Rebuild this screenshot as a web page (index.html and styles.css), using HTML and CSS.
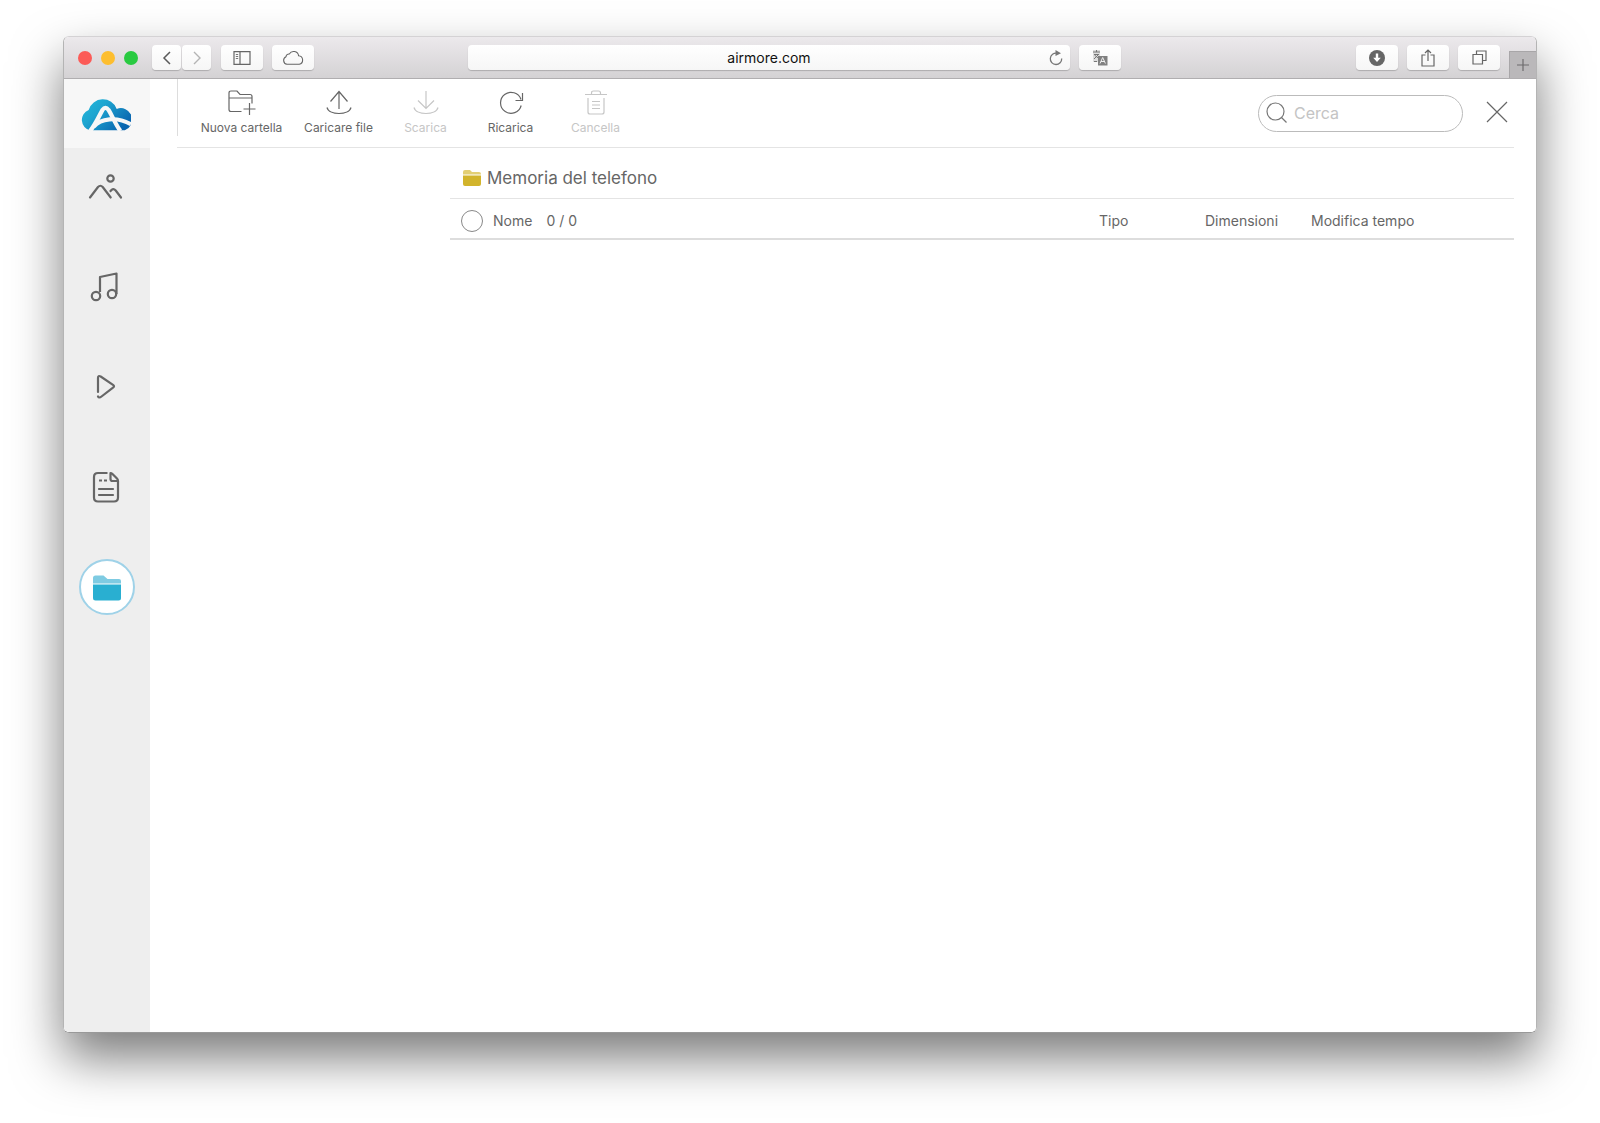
FILE: index.html
```html
<!DOCTYPE html>
<html lang="it">
<head>
<meta charset="utf-8">
<title>airmore.com</title>
<link rel="stylesheet" href="styles.css">
</head>
<body>
<div class="window">
  <header class="titlebar">
    <div class="lights"><span class="light red"></span><span class="light yellow"></span><span class="light green"></span></div>
    <div class="nav-pair">
      <button class="tb-btn small" aria-label="Indietro"><svg width="10" height="14" viewBox="0 0 10 14"><path d="M8 1 2 7l6 6" stroke="#5a5a5a" stroke-width="1.5"/></svg></button>
      <button class="tb-btn small" aria-label="Avanti"><svg width="10" height="14" viewBox="0 0 10 14"><path d="m2 1 6 6-6 6" stroke="#b4b4b4" stroke-width="1.4"/></svg></button>
    </div>
    <button class="tb-btn" aria-label="Barra laterale"><svg width="18" height="14" viewBox="0 0 18 14"><path d="M1 .7h16v12.6H1zM7 1v12" stroke="#666" stroke-width="1.2"/><path d="M2.8 3.5h2.4M2.8 5.5h2.4M2.8 7.5h2.4" stroke="#777"/></svg></button>
    <button class="tb-btn" aria-label="iCloud"><svg width="22" height="16" viewBox="0 0 22 16"><path d="M5 14.300a4 4 0 0 1-1-7.600A3 3 0 0 1 7.300 4 5 5 0 0 1 16.600 5.800 4.300 4.300 0 0 1 17.200 14.300Z" stroke="#666" stroke-width="1.100"/></svg></button>
    <div class="address">
      <input class="url" type="text" value="airmore.com" aria-label="Indirizzo">
      <button class="reload" aria-label="Ricarica pagina"><svg width="14" height="16" viewBox="0 0 14 16"><path d="M8 3.200A5.700 5.700 0 1 0 12.700 8.500" stroke="#777" stroke-width="1.300"/><path d="M6.500 0 12 3.200 6.500 6Z" fill="#777"/></svg></button>
    </div>
    <button class="tb-btn translate" aria-label="Traduci"><svg width="16" height="16" viewBox="0 0 16 16"><path d="M1 0h7v12H1z" fill="#ddd"/><path d="M1 2h7M2 4.500h5M4.500 0v2M6.500 4.500 2 9M2.500 5l5 4M2 11.500h3" stroke="#777"/><path d="M6 6h9.500v9.500H6z" fill="#808080"/><path d="m8 13.500 2.700-6 2.700 6M9 11.500h3.500" stroke="#eee"/></svg></button>
    <div class="tools">
      <button class="tb-btn" aria-label="Download"><svg width="16" height="16" viewBox="0 0 16 16"><circle cx="8" cy="8" r="8" fill="#666"/><path d="M6.800 3.500h2.400v4.200h2.600L8 12 4.200 7.700h2.600z" fill="#fff"/></svg></button>
      <button class="tb-btn" aria-label="Condividi"><svg width="14" height="18" viewBox="0 0 14 18"><path d="M4.500 6H1v11h12V6H9.500M7 12V1M4 4l3-3 3 3" stroke="#666" stroke-width="1.200"/></svg></button>
      <button class="tb-btn" aria-label="Pannelli"><svg width="15" height="15" viewBox="0 0 15 15"><path d="M1 4.500h9.500V14H1zM4.500 4.200V1H14v9.500h-3" stroke="#666" stroke-width="1.200"/></svg></button>
    </div>
    <button class="new-tab" aria-label="Nuovo pannello"><svg width="14" height="14" viewBox="0 0 14 14"><path d="M7 1v12M1 7h12" stroke="#6d6b6d" stroke-width="1.200"/></svg></button>
  </header>

  <div class="app">
    <aside class="sidebar">
      <a class="logo" href="#" aria-label="AirMore"><svg width="50" height="35" viewBox="1 0 49 34">
        <defs><linearGradient id="cloud" x1="0" y1="0" x2="1" y2=".6"><stop offset="0" stop-color="#23b9dc"/><stop offset=".4" stop-color="#1ea5d0"/><stop offset="1" stop-color="#0a66b0"/></linearGradient></defs>
        <path d="M10 33.500A10.500 10.500 0 0 1 8.500 13.500 14.500 14.500 0 0 1 36 12.500 11 11 0 0 1 44 33.500Z" fill="url(#cloud)"/>
        <path d="M10 34C15 28 18.500 20 22 13.500Q25 9.500 28 13.500C32 20 34.500 27 39.500 34" stroke="#f7f7f7" stroke-width="4.200"/>
        <path d="M13.500 30C20 22 36 19.500 50 27.500" stroke="#f7f7f7" stroke-width="4"/>
      </svg></a>
      <nav class="side-nav">
        <a class="side-link" href="#" aria-label="Immagini"><svg width="36" height="28" viewBox="0 0 36 28"><g stroke="#666" stroke-width="2.200" stroke-linecap="round" stroke-linejoin="round"><circle cx="22.500" cy="5.500" r="3.200"/><path d="m2 24.500 8-10.500q2.400-2.500 4.700 0l8 10.500M22.500 18q2.600-3.600 5.200-.5l5.300 7"/></g></svg></a>
        <a class="side-link" href="#" aria-label="Musica"><svg width="32" height="30" viewBox="0 0 32 30"><g stroke="#666" stroke-width="2.200" stroke-linejoin="round"><circle cx="6" cy="24" r="4.200"/><circle cx="22" cy="22" r="4.200"/><path d="M10 20V5l16.500-3.500V22"/></g></svg></a>
        <a class="side-link" href="#" aria-label="Video"><svg width="20" height="26" viewBox="0 0 20 26"><path d="M2 18V4q0-3 2.700-1.500L17 10.800q2 1.400 0 2.800L5.500 22.500Q3 24.500 2 22.500" stroke="#666" stroke-width="2.200" stroke-linecap="round"/></svg></a>
        <a class="side-link" href="#" aria-label="Documenti"><svg width="28" height="32" viewBox="0 0 28 32"><g stroke="#666" stroke-width="2.200"><path d="M15.500 2H6Q2 2 2 6v20.500q0 4 4 4h16q4 0 4-4V10"/><path d="M18.500 2v6q0 2 2 2H26q0-1.500-1-2.500L20.500 3q-1-1-2-1Z" stroke-linejoin="round"/><path d="M7 18h14M7 24h14" stroke-linecap="round"/><path d="M7 9.500h3M12 9.500h3"/></g></svg></a>
        <a class="side-link active" href="#" aria-label="File"><svg width="30" height="26" viewBox="0 0 30 26"><path d="M1 8.500V3q0-2.500 2.500-2.500h8L15.500 4H27q2 0 2 2v2.500Z" fill="#7ecbe2"/><path d="M1 9.500h28V23q0 2.500-2.500 2.500h-23Q1 25.500 1 23Z" fill="#29afd1"/></svg></a>
      </nav>
    </aside>

    <main class="content">
      <div class="toolbar">
        <div class="actions">
          <button class="action wide"><svg width="28" height="26" viewBox="0 0 28 26"><path d="M13.500 21.500H3q-2 0-2-2V3q0-2 2-2h6l3 3.500h10q2 0 2 2v7M1 8h23M21.500 13v12M15.500 19h12" stroke="#666" stroke-width="1.200"/></svg>Nuova cartella</button>
          <button class="action mid"><svg width="26" height="26" viewBox="0 0 26 26"><path d="M13 19V2M4.500 11.500 13 1.500l8.500 10M1 17.500c2 8 22 8 24 0" stroke="#666" stroke-width="1.200"/></svg>Caricare file</button>
          <button class="action" disabled><svg width="26" height="26" viewBox="0 0 26 26"><path d="M13 1v17M5 10.500l8 8 8-8M1 17.500c2 8 22 8 24 0" stroke="#c6c6c6" stroke-width="1.200"/></svg>Scarica</button>
          <button class="action"><svg width="26" height="26" viewBox="0 0 26 26"><path d="M23.200 15.500A10.500 10.500 0 1 1 23 9.500M24.500 3v7.500h-7" stroke="#666" stroke-width="1.200"/></svg>Ricarica</button>
          <button class="action" disabled><svg width="24" height="26" viewBox="0 0 24 26"><path d="M1 4.500h22M7.500 4.500V3q0-2 2-2h5q2 0 2 2v1.500M4 8v14q0 2 2 2h12q2 0 2-2V8M8 11.500h8M8 15h8M8 18.500h8" stroke="#c6c6c6" stroke-width="1.200"/></svg>Cancella</button>
        </div>
        <label class="search"><svg width="22" height="22" viewBox="0 0 22 22"><circle cx="9.500" cy="9.500" r="8.500" stroke="#777" stroke-width="1.200"/><path d="m15.500 15.500 5 5" stroke="#777" stroke-width="1.200"/></svg><input type="text" placeholder="Cerca" aria-label="Cerca"></label>
        <button class="close" aria-label="Chiudi"><svg width="22" height="22" viewBox="0 0 22 22"><path d="m1 1 20 20M21 1 1 21" stroke="#666" stroke-width="1.200"/></svg></button>
      </div>
      <div class="panes">
        <section class="files">
          <div class="path"><svg width="18" height="16" viewBox="0 0 18 16"><path d="M0 4.500V2Q0 0 2 0h5l2 2h7q2 0 2 2v.5Z" fill="#e3cf74"/><path d="M0 5.500h18V14q0 2-2 2H2q-2 0-2-2Z" fill="#d2b42c"/></svg><a href="#">Memoria del telefono</a></div>
          <table class="list">
            <thead><tr>
              <th class="name"><div class="name-cell"><input type="checkbox" id="all"><label for="all">Nome</label><span>0 / 0</span></div></th>
              <th class="type">Tipo</th>
              <th class="size">Dimensioni</th>
              <th class="date">Modifica tempo</th>
            </tr></thead>
          </table>
        </section>
      </div>
    </main>
  </div>
</div>
</body>
</html>
```
FILE: styles.css
```css
* { box-sizing: border-box; }

body {
  margin: 0;
  min-height: 100vh;
  padding: 36px 63px 90px;
  display: flex;
  background: #fff;
  color: #666;
  font-family: Inter, "Liberation Sans", sans-serif;
}

button {
  border: 0;
  padding: 0;
  background: none;
  font: inherit;
  color: inherit;
}

input { font: inherit; }
a { color: inherit; text-decoration: none; }
svg { display: block; fill: none; flex: none; }

.window {
  flex: 1;
  display: flex;
  flex-direction: column;
  border-radius: 6px;
  border: 1px solid #b4b4b4;
  border-top-color: #d4d2d4;
  border-bottom-color: #999;
  box-shadow: 0 25px 50px rgba(0, 0, 0, .52);
  overflow: hidden;
}

/* Browser title bar */
.titlebar {
  display: flex;
  align-items: center;
  height: 42px;
  padding-left: 14px;
  background: linear-gradient(#ece9ec, #d4d2d4);
  border-bottom: 1px solid #b0aeb0;
}

.lights { display: flex; gap: 9px; margin-right: 14px; }
.light { width: 14px; height: 14px; border-radius: 50%; }
.red { background: #fc5b57; }
.yellow { background: #fdbe2f; }
.green { background: #29ca41; }

.nav-pair { display: flex; gap: 1px; margin-right: 10px; }

.tb-btn {
  display: flex;
  align-items: center;
  justify-content: center;
  width: 42px;
  height: 25px;
  margin-right: 9px;
  border-radius: 4px;
  background: linear-gradient(#fff, #f6f6f6);
  box-shadow: 0 1px 1px rgba(0, 0, 0, .2);
}
.tb-btn.small { width: 29px; margin-right: 0; }

.address {
  flex: 1;
  display: flex;
  align-items: center;
  height: 25px;
  margin-left: 145px;
  padding: 0 7px 0 21px;
  border-radius: 4px;
  background: linear-gradient(#fff, #f6f6f6);
  box-shadow: 0 1px 1px rgba(0, 0, 0, .2);
}
.url {
  flex: 1;
  min-width: 0;
  border: 0;
  padding: 0;
  background: none;
  text-align: center;
  font-size: 14px;
  color: #111;
}
.translate { margin-left: 9px; }
.tools { display: flex; margin-left: 226px; }
.new-tab {
  display: flex;
  align-items: center;
  justify-content: center;
  align-self: flex-end;
  width: 27px;
  height: 27px;
  background: #bab8ba;
  border: 1px solid #a8a6a8;
  border-width: 1px 0 0 1px;
}

/* Application */
.app { flex: 1; display: flex; background: #fff; }

.sidebar { width: 86px; background: #eee; }
.logo {
  display: flex;
  align-items: center;
  justify-content: center;
  height: 69px;
  padding: 0 2px 0 0;
  background: #f7f7f7;
}
.side-nav {
  display: flex;
  flex-direction: column;
  align-items: center;
  gap: 44px;
  padding-top: 11px;
}
.side-link {
  display: flex;
  align-items: center;
  justify-content: center;
  width: 56px;
  height: 56px;
  padding-right: 2px;
  border-radius: 50%;
}
.side-link.active {
  padding: 2px 0 0;
  background: #fff;
  border: 2px solid #9fd2e8;
}

.content {
  flex: 1;
  min-width: 0;
  padding: 0 22px 0 27px;
  display: flex;
  flex-direction: column;
}

.toolbar {
  display: flex;
  align-items: flex-start;
  height: 69px;
  border-bottom: 1px solid #e4e4e4;
}
.actions {
  display: flex;
  height: 57px;
  padding-left: 11px;
  margin-right: auto;
  border-left: 1px solid #ddd;
}
.action {
  display: flex;
  flex-direction: column;
  align-items: center;
  gap: 4px;
  width: 85px;
  padding-top: 11px;
  font-size: 12px;
  line-height: 16px;
  white-space: nowrap;
}
.action.mid { width: 89px; }
.action.wide { width: 105px; }
.action:disabled { color: #c6c6c6; }

.search {
  display: flex;
  align-items: center;
  gap: 6px;
  width: 205px;
  height: 37px;
  margin-top: 16px;
  padding: 0 16px 2px 7px;
  border: 1px solid #bbb;
  border-radius: 19px;
}
.search input {
  flex: 1;
  min-width: 0;
  padding: 0;
  border: 0;
  background: none;
  font-size: 16px;
}
.search input::placeholder { color: #c4c4c4; opacity: 1; }
.close { margin: 22px 6px 0 23px; }

.panes { padding-left: 273px; }

.path {
  display: flex;
  align-items: center;
  gap: 6px;
  height: 51px;
  padding: 9px 13px 0;
  border-bottom: 1px solid #e4e4e4;
  font-size: 17px;
}

.list { width: 100%; border-collapse: collapse; table-layout: fixed; }
.list th {
  height: 40px;
  padding: 4px 12px 0 11px;
  border-bottom: 2px solid #ddd;
  font-size: 14px;
  font-weight: 400;
  text-align: left;
}
.list .type, .list .size { width: 106px; }
.list .date { width: 214px; }
.name-cell { display: flex; align-items: center; gap: 14px; }
.name-cell input {
  appearance: none;
  width: 22px;
  height: 22px;
  margin: 0 -4px 0 0;
  border: 1px solid #888;
  border-radius: 50%;
}
```
